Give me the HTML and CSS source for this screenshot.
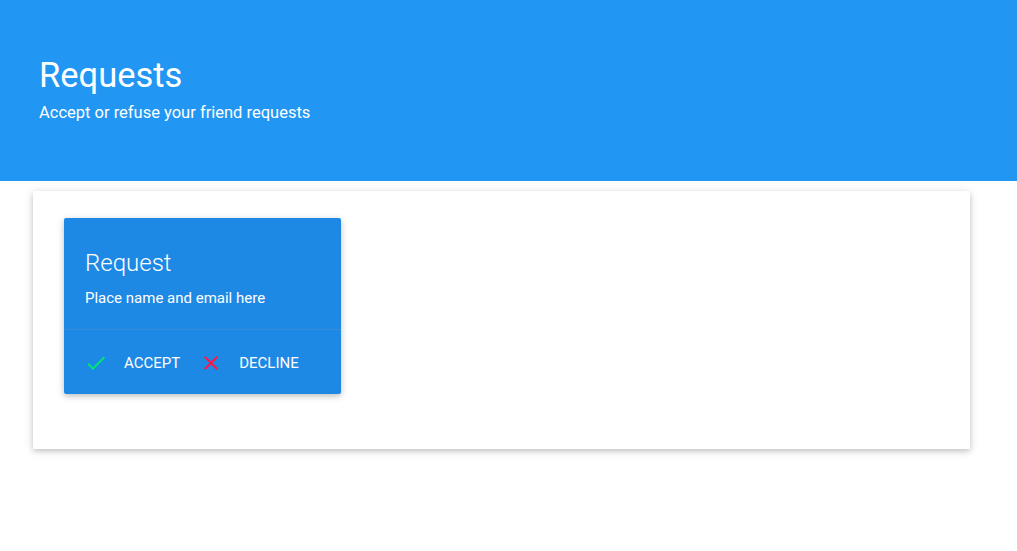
FILE: index.html
```html
<!DOCTYPE html>
<html>
<head>
<meta charset="utf-8">
<link rel="stylesheet" href="styles.css">
</head>
<body>
<header class="hero">
  <h1 class="hero-title">Requests</h1>
  <p class="hero-sub">Accept or refuse your friend requests</p>
</header>
<main class="panel">
  <div class="card">
    <div class="card-content">
      <div class="card-title">Request</div>
      <p class="card-text">Place name and email here</p>
    </div>
    <div class="card-action">
      <a class="action">
        <svg class="icon icon-accept" viewBox="0 0 24 24"><path d="M9 16.17L4.83 12l-1.42 1.41L9 19 21 7l-1.41-1.41z"/></svg>
        <span class="action-label">Accept</span>
      </a>
      <a class="action">
        <svg class="icon icon-decline" viewBox="0 0 24 24"><path d="M19 6.41L17.59 5 12 10.59 6.41 5 5 6.41 10.59 12 5 17.59 6.41 19 12 13.41 17.59 19 19 17.59 13.41 12z"/></svg>
        <span class="action-label">Decline</span>
      </a>
    </div>
  </div>
</main>
</body>
</html>
```
FILE: styles.css
```css
* { box-sizing: border-box; }
html, body {
  margin: 0;
  padding: 0;
  background: #fff;
  font-family: Roboto, "Liberation Sans", Arial, sans-serif;
}
body {
  padding-bottom: 40px;
}
.hero {
  background: #2196F3;
  color: #fff;
  height: 181px;
  padding: 54px 0 0 39px;
}
.hero-title {
  margin: 0;
  font-size: 34.5px;
  font-weight: 400;
  line-height: 42px;
}
.hero-sub {
  margin: 5px 0 0;
  font-size: 16.5px;
  line-height: 24px;
}
.panel {
  display: block;
  margin: 10px 0 0 33px;
  width: 937px;
  height: 258px;
  padding: 27px 31px;
  background: #fff;
  box-shadow: 0 2px 5px 0 rgba(0,0,0,0.16), 0 2px 10px 0 rgba(0,0,0,0.12);
}
.card {
  width: 277px;
  background: #1E88E5;
  color: #fff;
  border-radius: 2px;
  box-shadow: 0 2px 5px 0 rgba(0,0,0,0.16), 0 2px 10px 0 rgba(0,0,0,0.12);
}
.card-content {
  padding: 29px 21px 21px;
}
.card-title {
  font-size: 24px;
  font-weight: 300;
  line-height: 32px;
}
.card-text {
  margin: 9px 0 0;
  font-size: 15px;
  line-height: 20px;
}
.card-action {
  border-top: 1px solid rgba(160,160,160,0.2);
  padding: 21px 20px 19px;
  display: flex;
  align-items: center;
  gap: 19px;
}
.action {
  display: flex;
  align-items: center;
  gap: 16px;
  color: #fff;
}
.icon {
  width: 24px;
  height: 24px;
  display: block;
}
.icon-accept { fill: #00E676; }
.icon-decline { fill: #FF1744; }
.action-label {
  font-size: 15px;
  line-height: 24px;
  text-transform: uppercase;
}
```
